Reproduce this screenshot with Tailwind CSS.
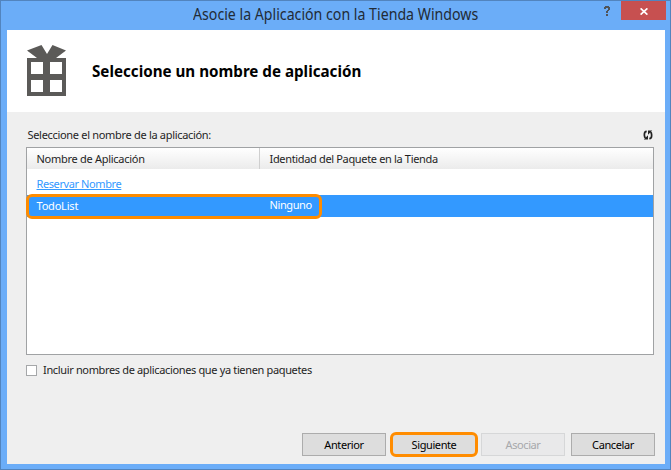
<!DOCTYPE html>
<html lang="es">
<head>
<meta charset="utf-8">
<title>Asocie la Aplicación con la Tienda Windows</title>
<script src="https://cdn.jsdelivr.net/npm/@tailwindcss/browser@4"></script>
</head>
<body class="overflow-hidden">
<div class="flex h-[470px] w-[671px] flex-col border border-[#5284be] bg-[#6badf8] pr-[5px] pb-[5px] pl-1.5 font-['Noto_Sans','Open_Sans',sans-serif] text-[11px] leading-4 whitespace-nowrap text-[#1e1e1e]">
  <header class="relative flex h-[29px] shrink-0 items-start justify-end">
    <h1 class="absolute top-[2px] left-[186px] origin-left scale-x-[0.885] text-[16px] leading-[22px] text-[#222b36]">Asocie la Aplicación con la Tienda Windows</h1>
    <svg class="mt-[5px] mr-[11px] h-[10px] w-[6px]" viewBox="0 0 6 10" fill="#505459" shape-rendering="crispEdges"><path d="M1 0h4v1h1v3h-1v1h-1v2h-2v-2h1v-1h1v-2h-2v1h-2v-2h1zM2 8h2v2h-2z"/></svg>
    <div class="-mr-px flex h-[19px] w-[45px] items-center justify-center bg-[#c75050]">
      <svg class="mt-[2px] h-[7px] w-2" viewBox="0 0 8 7" stroke="#fff" stroke-width="1.7"><path d="M.6.4 7.400 6.600M7.400.4.6 6.600"/></svg>
    </div>
  </header>
  <main class="flex w-[658px] flex-1 flex-col bg-[#efefef]">
    <section class="flex h-[82px] shrink-0 bg-white pl-5">
      <svg class="mt-[15px] h-[51px] w-[39px]" viewBox="0 0 39 51" fill="#5b5a58"><path d="M0 5.500 14.500 0 20 9 25.500 0 39 5.500 29 13H10z"/><path fill-rule="evenodd" d="M0 13h39v38H0zM4 17v12h12V17zM23 17v12h12V17zM4 35v12h12V35zM23 35v12h12V35z"/></svg>
      <h2 class="mt-[30px] ml-[26px] origin-left scale-x-[0.948] text-[16px] leading-[22px] font-bold text-black">Seleccione un nombre de aplicación</h2>
    </section>
    <section class="flex flex-1 flex-col pl-[19px]">
      <div class="flex h-[35px] w-[628px] justify-between">
        <span class="mt-[15px] ml-[1.5px] tracking-[-0.31px]">Seleccione el nombre de la aplicación:</span>
        <svg class="mt-[18px] mr-px h-[10px] w-[10px]" viewBox="0 0 10 10" fill="none" stroke="#222" stroke-width="1.7"><path d="M3.700 1.300Q1.400 1.600 1.400 4V5.500Q1.400 7.200 2.600 8M6.300 8.700Q8.600 8.400 8.600 6V4.500Q8.600 2.800 7.400 2"/><path fill="#222" stroke="none" d="M.8 9.500H5V5.300zM9.200.5H5V4.700z"/></svg>
      </div>
      <div class="relative h-[208px] w-[628px] border border-[#a0a2a4] bg-white">
        <div class="flex h-[21px] bg-linear-to-b from-white to-[#ebebeb]">
          <div class="w-[233px] border-r border-[#cfcfcf] pt-[3px] pl-[9.5px] tracking-[-0.28px]">Nombre de Aplicación</div>
          <div class="pt-[3px] pl-[9.5px] tracking-[-0.34px]">Identidad del Paquete en la Tienda</div>
        </div>
        <div class="flex h-[26px] pt-[7px] pl-[9.5px]"><a class="tracking-[-0.4px] text-[#3399ff] underline">Reservar Nombre</a></div>
        <div class="flex h-[22px] bg-[#3399ff] text-white">
          <div class="w-[233px] pt-[3px] pl-[9.5px] tracking-[-0.2px]">TodoList</div>
          <div class="pt-[2px] pl-[9.5px] tracking-[-0.4px]">Ninguno</div>
        </div>
        <div class="absolute top-[46px] -left-px h-[25px] w-[296px] rounded-[6px] border-3 border-[#ff8c00]"></div>
      </div>
      <label class="mt-[7px] flex h-4 items-center"><span class="mt-px h-[11px] w-[11px] border border-[#a5a7a9] bg-white"></span><span class="ml-1.5 tracking-[-0.35px]">Incluir nombres de aplicaciones que ya tienen paquetes</span></label>
      <div class="mt-[54px] flex w-[629px] items-center justify-end tracking-[-0.4px] text-black">
        <div class="flex h-[23px] w-[84px] items-center justify-center border border-[#acacac] bg-[#dddddd]"><span>Anterior</span></div>
        <div class="ml-1 flex h-[25px] w-[88px] items-center justify-center rounded-[6px] border-3 border-[#ff8c00] bg-[#dddddd]"><span>Siguiente</span></div>
        <div class="ml-[3px] flex h-[23px] w-[84px] items-center justify-center border border-[#d6d7d8] bg-[#e9e9ea] text-[#a7a8ab]"><span>Asociar</span></div>
        <div class="ml-1.5 flex h-[23px] w-[84px] items-center justify-center border border-[#acacac] bg-[#dddddd]"><span>Cancelar</span></div>
      </div>
    </section>
  </main>
</div>
</body>
</html>
